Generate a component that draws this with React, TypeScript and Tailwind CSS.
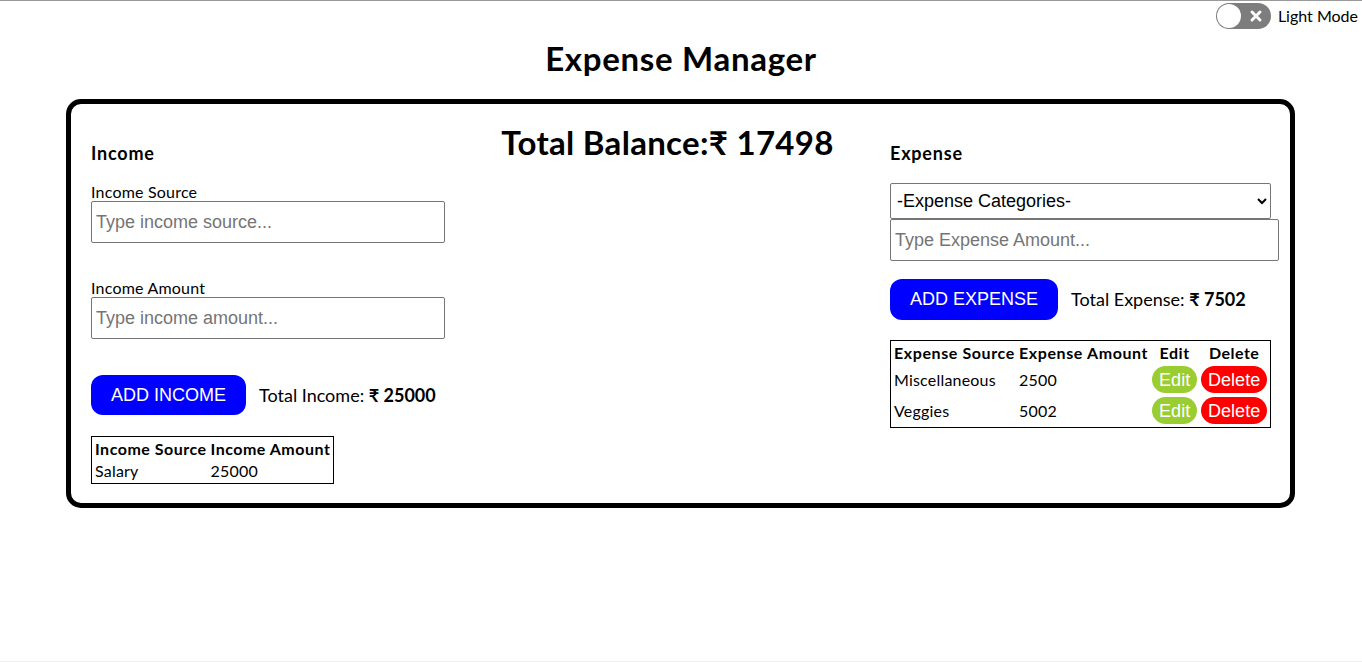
import { useState } from 'react';

const expenses = [
  { source: 'Miscellaneous', amount: 2500 },
  { source: 'Veggies', amount: 5002 },
];

export default function App() {
  const [light, setLight] = useState(false);

  return (
    <div className="min-h-[662px] bg-white text-black font-['Lato',sans-serif] border-t border-[#9a9a9a] border-b border-b-[#eeeeee]">
      {/* Theme toggle */}
      <div className="flex justify-end items-center h-[29px] pr-[4px]">
        <button
          onClick={() => setLight(!light)}
          className="relative w-[55px] h-[26px] rounded-full bg-[#7d7d7d] flex items-center"
        >
          <span className="absolute left-[1px] top-[1px] w-[24px] h-[24px] rounded-full bg-white" />
          <svg className="absolute right-[8px] top-[6px] w-[14px] h-[14px]" viewBox="0 0 14 14">
            <path d="M3 3 L11 11 M11 3 L3 11" stroke="white" strokeWidth="3" strokeLinecap="round" />
          </svg>
        </button>
        <span className="ml-[7px] text-[16px]">Light Mode</span>
      </div>

      <h1 className="mt-[10px] text-center text-[33px] leading-[37px] font-bold tracking-[0.7px]">Expense Manager</h1>

      <div className="mt-[22px] ml-[66px] w-[1229px] border-[5px] border-black rounded-[15px] pt-[20px] pb-[19px] pl-[20px] pr-[11px] flex items-start">
        {/* Income */}
        <div className="w-[354px] shrink-0">
          <h3 className="mt-[18px] text-[18px] leading-[22px] font-bold tracking-[0.8px]">Income</h3>
          <label className="block mt-[19px] text-[16px] leading-[18px] tracking-[0.2px]">Income Source</label>
          <input
            className="block w-[354px] h-[42px] border border-[#767676] rounded-[2px] px-[4px] text-[18px] font-['Liberation_Sans',sans-serif] placeholder:text-[#757575]"
            placeholder="Type income source..."
          />
          <label className="block mt-[36px] text-[16px] leading-[18px] tracking-[0.2px]">Income Amount</label>
          <input
            className="block w-[354px] h-[42px] border border-[#767676] rounded-[2px] px-[4px] text-[18px] font-['Liberation_Sans',sans-serif] placeholder:text-[#757575]"
            placeholder="Type income amount..."
          />
          <div className="mt-[36px] flex items-center">
            <button className="w-[155px] h-[40px] rounded-[12px] bg-[#0000ff] text-white text-[18px] font-['Liberation_Sans',sans-serif]">
              ADD INCOME
            </button>
            <span className="ml-[13px] text-[18px] whitespace-nowrap">
              Total Income: <b>₹ 25000</b>
            </span>
          </div>
          <table className="mt-[21px] border-separate border-spacing-[2px] border border-black text-[16px] leading-[18px]">
            <thead>
              <tr>
                <th className="w-[113px] p-[1px] text-left whitespace-nowrap tracking-[0.5px]">Income Source</th>
                <th className="w-[120px] p-[1px] text-left whitespace-nowrap tracking-[0.5px]">Income Amount</th>
              </tr>
            </thead>
            <tbody>
              <tr>
                <td className="p-[1px] tracking-[0.2px]">Salary</td>
                <td className="p-[1px] tracking-[0.2px]">25000</td>
              </tr>
            </tbody>
          </table>
        </div>

        {/* Balance */}
        <div className="flex-1 text-center">
          <h2 className="text-[33px] leading-[37px] font-bold whitespace-nowrap tracking-[0.3px]">Total Balance:₹ 17498</h2>
        </div>

        {/* Expense */}
        <div className="w-[389px] shrink-0">
          <h3 className="mt-[18px] text-[18px] leading-[22px] font-bold tracking-[0.8px]">Expense</h3>
          <select className="block mt-[19px] w-[381px] h-[36px] border border-[#767676] rounded-[2px] px-[2px] text-[18px] font-['Liberation_Sans',sans-serif] bg-white">
            <option>-Expense Categories-</option>
            <option>Food</option>
            <option>Miscellaneous</option>
          </select>
          <input
            className="block w-[389px] h-[42px] border border-[#767676] rounded-[2px] px-[4px] text-[18px] font-['Liberation_Sans',sans-serif] placeholder:text-[#757575]"
            placeholder="Type Expense Amount..."
          />
          <div className="mt-[18px] flex items-center">
            <button className="w-[168px] h-[41px] rounded-[12px] bg-[#0000ff] text-white text-[18px] font-['Liberation_Sans',sans-serif]">
              ADD EXPENSE
            </button>
            <span className="ml-[13px] text-[18px] whitespace-nowrap">
              Total Expense: <b>₹ 7502</b>
            </span>
          </div>
          <table className="mt-[20px] border-separate border-spacing-[2px] border border-black text-[16px] leading-[18px]">
            <thead>
              <tr>
                <th className="w-[123px] p-[1px] text-left whitespace-nowrap tracking-[0.6px]">Expense Source</th>
                <th className="w-[131px] p-[1px] text-left whitespace-nowrap tracking-[0.6px]">Expense Amount</th>
                <th className="w-[47px] p-[1px] text-center tracking-[0.5px]">Edit</th>
                <th className="w-[68px] p-[1px] text-center tracking-[0.5px]">Delete</th>
              </tr>
            </thead>
            <tbody>
              {expenses.map((e) => (
                <tr key={e.source}>
                  <td className="p-[1px] tracking-[0.2px]">{e.source}</td>
                  <td className="p-[1px] tracking-[0.2px]">{e.amount}</td>
                  <td className="p-[1px] text-center">
                    <button className="w-[45px] h-[27px] rounded-full bg-[#9acd32] text-white text-[18px] font-['Liberation_Sans',sans-serif]">
                      Edit
                    </button>
                  </td>
                  <td className="p-[1px] text-center">
                    <button className="w-[66px] h-[27px] rounded-full bg-[#ff0000] text-white text-[18px] font-['Liberation_Sans',sans-serif]">
                      Delete
                    </button>
                  </td>
                </tr>
              ))}
            </tbody>
          </table>
        </div>
      </div>
    </div>
  );
}
